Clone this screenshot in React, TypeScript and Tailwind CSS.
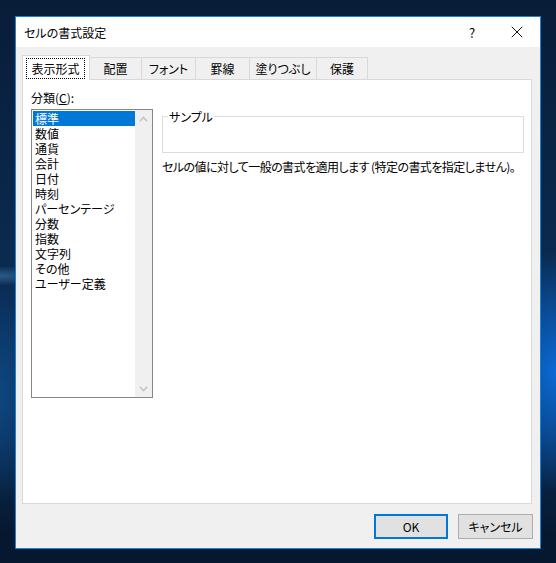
import { X } from "lucide-react";

const categories = [
  "標準",
  "数値",
  "通貨",
  "会計",
  "日付",
  "時刻",
  "パーセンテージ",
  "分数",
  "指数",
  "文字列",
  "その他",
  "ユーザー定義",
];

const otherTabs = [
  { label: "配置", width: "w-[52px]" },
  { label: "フォント", width: "w-[54px]" },
  { label: "罫線", width: "w-[54px]" },
  { label: "塗りつぶし", width: "w-[67px]" },
  { label: "保護", width: "w-[51px]" },
];

function Chevron({ down }: { down?: boolean }) {
  return (
    <svg width="9" height="6" viewBox="0 0 9 6" className={down ? "rotate-180" : ""}>
      <path d="M0.8 5.2 L4.5 1.5 L8.2 5.2" fill="none" stroke="#c4c4c4" strokeWidth="1.6" />
    </svg>
  );
}

export default function App() {
  const selected = 0;

  return (
    <div className="w-[556px] h-[563px] overflow-hidden pt-[16px] pl-[15px] bg-[#07203d] bg-[radial-gradient(ellipse_70px_120px_at_100%_66%,#0a6ad6_0%,#0a4f9e_45%,rgba(8,40,80,0)_100%),radial-gradient(ellipse_40px_110px_at_0%_70%,#0d4780_0%,rgba(8,40,80,0)_100%),radial-gradient(ellipse_60px_10px_at_0%_49%,#2a5a88_0%,rgba(8,40,80,0)_100%),linear-gradient(180deg,#081d38_0%,#0a2a4f_45%,#0a3260_70%,#061830_95%)] font-['Noto_Sans_CJK_JP',sans-serif] [font-feature-settings:'palt'] text-[12px] leading-[15px] text-black">
      <div className="w-[526px] h-[533px] border border-[#1883d7] bg-[#f0f0f0] flex flex-col">
        {/* タイトルバー */}
        <div className="h-[30px] shrink-0 bg-white flex items-center pl-[8px]">
          <span>セルの書式設定</span>
          <div className="ml-auto flex h-full items-center">
            <span className="w-[44px] text-center text-[13px]">?</span>
            <span className="w-[46px] h-full flex items-center justify-center">
              <X size={20} strokeWidth={1.2} color="#111" />
            </span>
          </div>
        </div>

        <div className="pt-[8px] pl-[6px]">
          {/* タブ */}
          <div className="flex items-start h-[24px]">
            <div className="relative z-10 w-[68px] h-[25px] bg-white border-l border-t border-r border-[#d9d9d9] pl-[3px] pr-[4px] pt-[2px]">
              <div className="h-[21px] border border-dotted border-black flex items-center justify-center">
                表示形式
              </div>
            </div>
            {otherTabs.map((t) => (
              <div
                key={t.label}
                className={`${t.width} h-[22px] mt-[2px] border-t border-r border-[#d9d9d9] flex items-center justify-center`}
              >
                {t.label}
              </div>
            ))}
          </div>

          {/* パネル */}
          <div className="w-[510px] h-[425px] border border-[#d9d9d9] bg-white pt-[10px] pl-[8px]">
            <div className="h-[15px]">
              分類(<span className="underline">C</span>):
            </div>
            <div className="mt-[4px] flex items-start">
              <div className="w-[122px] h-[289px] border border-[#828790] flex">
                <div className="w-[103px] pl-px pt-px">
                  {categories.map((c, i) => (
                    <div
                      key={c}
                      className={`h-[15px] pl-[2px] whitespace-nowrap ${
                        i === selected ? "bg-[#0078d7] text-white" : ""
                      }`}
                    >
                      {c}
                    </div>
                  ))}
                </div>
                <div className="w-[17px] bg-[#f0f0f0] flex flex-col justify-between">
                  <div className="h-[17px] flex items-center justify-center">
                    <Chevron />
                  </div>
                  <div className="h-[17px] flex items-center justify-center">
                    <Chevron down />
                  </div>
                </div>
              </div>

              <div className="ml-[9px]">
                <div className="relative mt-[7px] w-[362px] h-[37px] border border-[#dcdcdc]">
                  <span className="absolute -top-[8px] left-[5px] px-px bg-white">サンプル</span>
                </div>
                <div className="mt-[6px] whitespace-nowrap tracking-[-0.55px]">
                  セルの値に対して一般の書式を適用します (特定の書式を指定しません)。
                </div>
              </div>
            </div>
          </div>
        </div>

        {/* ボタン */}
        <div className="mt-[10px] flex justify-end gap-[10px] pr-[7px]">
          <button className="w-[74px] h-[25px] border-2 border-[#0078d7] bg-[#e1e1e1] flex items-center justify-center">
            OK
          </button>
          <button className="w-[75px] h-[25px] border border-[#adadad] bg-[#e1e1e1] flex items-center justify-center">
            キャンセル
          </button>
        </div>
      </div>
    </div>
  );
}
